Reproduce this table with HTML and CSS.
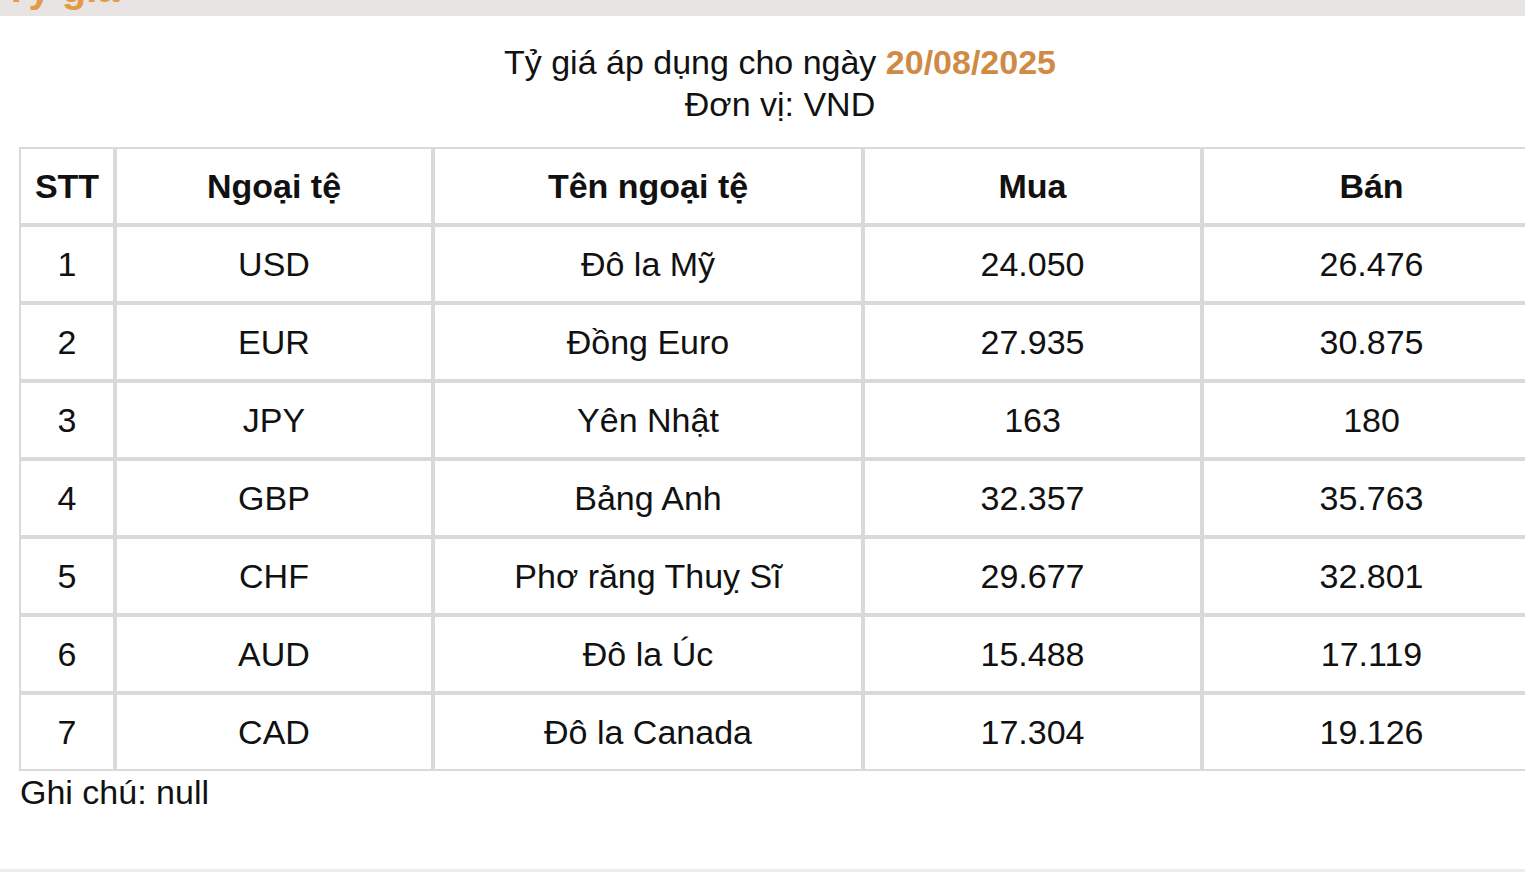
FILE: index.html
```html
<!DOCTYPE html>
<html lang="vi">
<head>
<meta charset="utf-8">
<title>Tỷ giá</title>
<link rel="stylesheet" href="styles.css">
</head>
<body>
<div class="topbar"><span class="topbar-text">Tỷ giá</span></div>
<div class="page">
  <div class="content">
    <div class="title">
      <div>Tỷ giá áp dụng cho ngày <span class="date">20/08/2025</span></div>
      <div>Đơn vị: VND</div>
    </div>
    <table class="rates">
      <colgroup>
        <col class="c1"><col class="c2"><col class="c3"><col class="c4"><col class="c5">
      </colgroup>
      <thead>
        <tr><th>STT</th><th>Ngoại tệ</th><th>Tên ngoại tệ</th><th>Mua</th><th>Bán</th></tr>
      </thead>
      <tbody>
        <tr><td>1</td><td>USD</td><td>Đô la Mỹ</td><td>24.050</td><td>26.476</td></tr>
        <tr><td>2</td><td>EUR</td><td>Đồng Euro</td><td>27.935</td><td>30.875</td></tr>
        <tr><td>3</td><td>JPY</td><td>Yên Nhật</td><td>163</td><td>180</td></tr>
        <tr><td>4</td><td>GBP</td><td>Bảng Anh</td><td>32.357</td><td>35.763</td></tr>
        <tr><td>5</td><td>CHF</td><td>Phơ răng Thuỵ Sĩ</td><td>29.677</td><td>32.801</td></tr>
        <tr><td>6</td><td>AUD</td><td>Đô la Úc</td><td>15.488</td><td>17.119</td></tr>
        <tr><td>7</td><td>CAD</td><td>Đô la Canada</td><td>17.304</td><td>19.126</td></tr>
      </tbody>
    </table>
    <div class="note">Ghi chú: null</div>
  </div>
</div>
</body>
</html>
```
FILE: styles.css
```css
html, body {
  margin: 0;
  padding: 0;
  background: #ffffff;
  overflow: hidden;
}
body {
  width: 1525px;
  height: 872px;
  font-family: "Liberation Sans", Arial, sans-serif;
  color: #111111;
}
.topbar {
  height: 16px;
  background: #e8e4e4;
  overflow: hidden;
  display: flex;
  align-items: flex-end;
}
.topbar-text {
  font-weight: bold;
  font-size: 40px;
  line-height: 40px;
  color: #e39a45;
  margin-left: 4px;
  margin-bottom: 8px;
}
.page {
  height: 853px;
  border-bottom: 3px solid #ececec;
  overflow: hidden;
}
.content {
  width: 1522px;
  margin-left: 19px;
  padding-top: 25px;
}
.title {
  text-align: center;
  font-size: 34px;
  line-height: 42px;
}
.date {
  font-weight: bold;
  color: #cf8a45;
}
.rates {
  margin-top: 22px;
  border-collapse: separate;
  border-spacing: 0;
  table-layout: fixed;
  width: 1522px;
  font-size: 34px;
}
.c1 { width: 96px; }
.c2 { width: 318px; }
.c3 { width: 430px; }
.c4 { width: 339px; }
.c5 { width: 339px; }
.rates th, .rates td {
  border: 2px solid #d9d9d9;
  height: 74px;
  padding: 0;
  text-align: center;
  vertical-align: middle;
  box-sizing: content-box;
  line-height: 38px;
}
.rates th {
  font-weight: bold;
}
.rates td {
  font-weight: normal;
}
.note {
  font-size: 34px;
  line-height: 42px;
  padding-left: 1px;
}
```
